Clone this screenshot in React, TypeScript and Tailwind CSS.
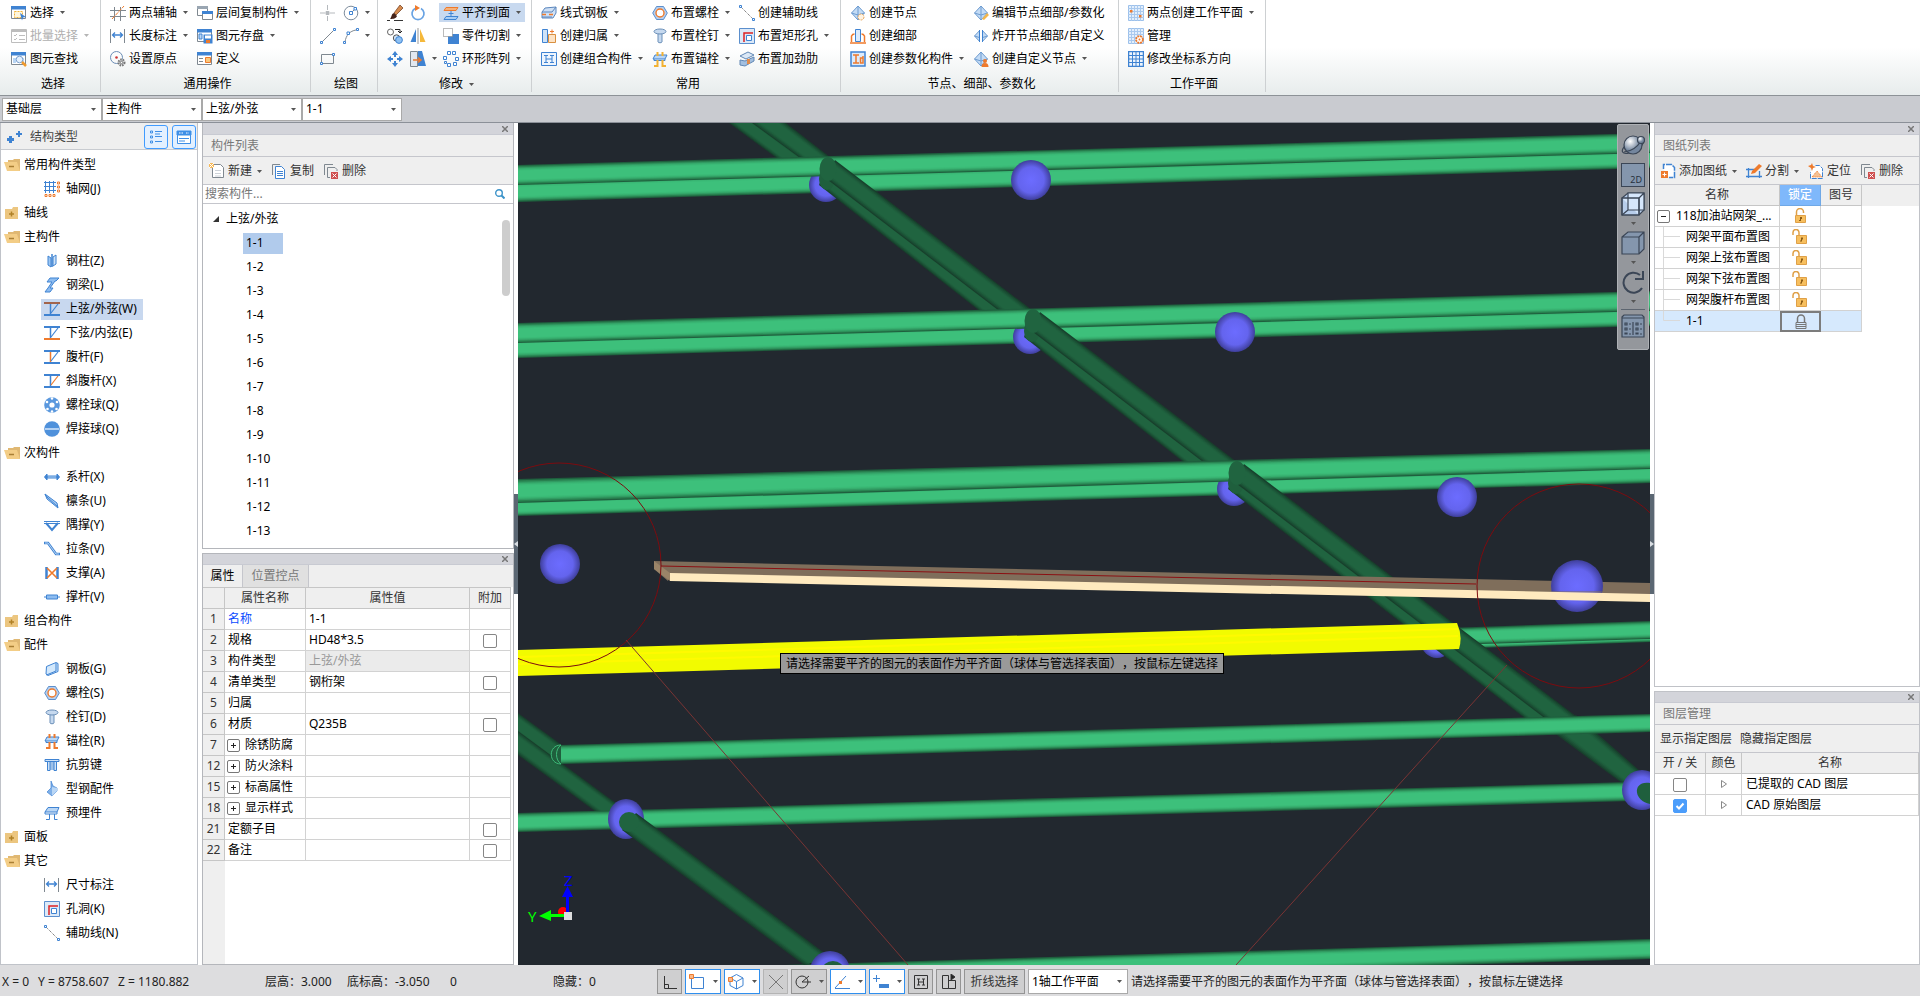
import React from "react";

type Pt = [number, number];

const B = "#3f83d2";
const L = "#b9d6f5";
const O = "#ee7a2c";
const G = "#7f8890";

const diamond = (
  <g>
    <path d="M8 1 14.5 8 8 15 1.500 8Z" fill="#c3dbf5" stroke="#6d9bd0" />
    <path d="M8 1v14M1.500 8 8 10l6.500-2" fill="none" stroke="#6d9bd0" />
  </g>
);
const windowBase = (
  <g>
    <path d="M.5 1.500h14v12H.5z" fill="#fff" stroke={G} />
    <path d="M0 1h15v3.500H0z" fill={B} />
  </g>
);
const gridBase = (
  <g>
    <path d="M.5.5h15v15H.5z" fill="#e3effc" stroke="#9cc0ea" />
    <path d="M3.500 0v16M6.500 0v16M9.500 0v16M12.500 0v16M0 3.500h16M0 6.500h16M0 9.500h16M0 12.500h16" stroke="#a9c9ee" />
  </g>
);
const nutShape = (
  <g>
    <path d="M4.500 1.500h7L15.300 8l-3.800 6.500h-7L.7 8Z" fill="#b6cfee" stroke="#5b8fcd" />
    <circle cx="8" cy="8" r="4" fill="#fff" stroke={O} strokeWidth="1.400" />
  </g>
);
const chord = (top: string, bottom: string, web: string, diag: string) => (
  <g fill="none">
    <path d="M0 2h16" stroke={top} strokeWidth="2" />
    <path d="M0 14h16" stroke={bottom} strokeWidth="2" />
    <path d="M6.500 3v10" stroke={web} strokeWidth="1.500" />
    <path d="M14 3 7 12" stroke={diag} strokeWidth="1.200" />
  </g>
);
const anchorShape = (leg: string) => (
  <g fill="none">
    <path d="M3 4h12l-2 4H1z" fill={L} stroke={B} />
    <path d="M2 8v1.500h11V8" stroke={B} />
    <path d="M5.500 1v4M10.500 1v4M5.500 9v6H2M10.500 9v6H14" stroke={leg} strokeWidth="2" />
  </g>
);

const icons: Record<string, React.ReactNode> = {
  select: (<g>{windowBase}<path d="M3.500 6.500h8v6h-8z" fill="#fff6dc" stroke="#f0b23a" strokeDasharray="2 1" /><path d="m9 8 6 4-3 .5-1 3z" fill={B} /></g>),
  batch: (<g fill="none" stroke="#bdbdbd"><path d="M.5 1.500h15v13H.5z" /><path d="M0 3h16" strokeWidth="2" /><path d="m3 7 1 1 2-2M8 7.500h6M3 11l1 1 2-2M8 11.500h6" /></g>),
  find: (<g>{windowBase}<path d="M2 7h3v5H2zM11 7h2v5h-2z" fill={L} /><circle cx="8.500" cy="8.500" r="3.300" fill="#e4f0fd" stroke="#7da0cc" /><path d="m11 11 4 4" stroke="#ef9a2d" strokeWidth="2.500" /></g>),
  axis: (<g fill="none"><path d="M4.500 2v14M10.500 2v14M0 5.500h16M0 11.500h16" stroke={G} /><path d="M2 14 14 1" stroke={O} strokeDasharray="4 1" /></g>),
  dim: (<g fill="none"><path d="M.5 1v14M14.500 1v14" stroke={G} /><path d="M3 7h9M5 4.500 2.500 7 5 9.500M10 4.500 12.500 7 10 9.500" stroke={B} strokeWidth="1.300" /></g>),
  origin: (<g fill="none"><circle cx="6.500" cy="6.500" r="6" stroke="#6b8db5" /><circle cx="6.500" cy="6.500" r="1.300" fill="#c33" /><circle cx="11.500" cy="11.500" r="3" fill="#d8dbde" stroke="#777" strokeWidth="2" strokeDasharray="1.500 1" /><circle cx="11.500" cy="11.500" r="1.200" fill="#fff" stroke="#777" /></g>),
  copyFloor: (<g><path d="M.5 1.500h10v9H.5z" fill="#fff" stroke={G} /><path d="M0 1h11v3H0z" fill="#9aa6b2" /><path d="M5.500 6.500h10v8h-10z" fill="#fff" stroke={G} /><path d="M5 6h11v3H5z" fill={B} /></g>),
  save: (<g>{windowBase}<path d="M2 6h3v5H2z" fill={L} stroke={B} /><path d="M6.500 6.500h9v9h-9z" fill={B} /><path d="M8 7.500h6v3H8z" fill="#fff" /><path d="M9 12h4v3H9z" fill={O} /></g>),
  define: (<g>{windowBase}<path d="M2 7.500h4M2 10.500h4" stroke={G} /><path d="M8.500 6.500h5v5h-5z" fill="#f9c77c" stroke={O} /></g>),
  point: (<g stroke="#b5b9bd"><path d="M0 8h5M10 8h5M7.500 0v5M7.500 11v5" /><path d="M6 6.500h3v3H6z" fill="#b5b9bd" /></g>),
  circle: (<g fill="none"><circle cx="8" cy="8" r="6.800" stroke="#7d8c9c" /><path d="m8 8 4-4" stroke={G} /><path d="M6.500 6.500h3v3h-3zM11 2.500h2.500V5H11z" fill="#fff" stroke={B} /></g>),
  line: (<g fill="none"><path d="M2 14 13 3" stroke={G} /><path d="M.5 13.500h2v2h-2zM13.500.5h2v2h-2z" fill="#fff" stroke={B} /></g>),
  arc: (<g fill="none"><path d="M2 14C3 7 7 3 13 2" stroke={G} /><path d="M.5 13.500h2v2h-2zM13.500.5h2v2h-2zM4 4h2.500v2.500H4z" fill="#fff" stroke={B} /></g>),
  rect: (<g fill="none"><path d="M1.500 3.500h12v9h-12z" stroke={G} /><path d="M.5 11.500h2v2h-2zM12.500 2.500h2v2h-2z" fill="#fff" stroke={B} /></g>),
  brush: (<g><path d="m7 8 6-8 3 3-7 7z" fill="#d58b4e" stroke="#6b3517" strokeWidth=".7" /><path d="m7 8 3 3c-1 3-5 3-7 3 2-2 1-5 4-6z" fill="#45231a" /><path d="M0 15.500h3M7 15.500h9" stroke="#333" /></g>),
  rotate: (<g fill="none"><path d="M5 3.500a6 6 0 1 0 6 0" stroke="#69a3e3" strokeWidth="1.700" /><path d="M5 0v6l5-3z" fill={O} /></g>),
  copyItem: (<g fill="none"><circle cx="3.500" cy="4" r="3" stroke="#666" /><circle cx="9.500" cy="10" r="3.200" fill="#cfe3f8" stroke="#555" /><circle cx="12" cy="12" r="3.400" fill="#8fc1f2" stroke={B} /><path d="M8 1.500h5V5m-2-2 2 2 2-2" stroke="#222" /></g>),
  mirror: (<g><path d="M6 1v13H.5z" fill={B} /><path d="M10 1v13h5.500z" fill="#f5b83a" /><path d="M8 0v16" stroke="#999" /></g>),
  move: (<g fill={B}><path d="m8 0 3 4H5zM8 16l3-4H5zM0 8l4-3v6zM16 8l-4-3v6z" /><path d="M7 3h2v3H7zM7 10h2v3H7zM3 7h3v2H3zM10 7h3v2h-3z" /></g>),
  trim: (<g><path d="M.5.5h7v15h-7z" fill="#e2e8f0" stroke={G} /><path d="M8 0h4l4 15H8z" fill={B} /><path d="M3 9h8M8 6.500 11 9l-3 2.500" stroke={O} strokeWidth="1.500" fill="none" /></g>),
  align: (<g fill="none"><path d="M3 2.500h12l-2 3H1z" fill="#f6b27c" stroke={O} /><path d="M3 11.500h12l-2 3H1z" fill="#a8cdf3" stroke={B} /><path d="M8 6v5M5.500 8.500h5" stroke={B} /></g>),
  cut: (<g><path d="M5 6h11v10H5z" fill={B} /><path d="M.5.5h9v8h-9z" fill="#fff" stroke="#777" strokeDasharray="1 1" /></g>),
  array: (<g fill="#fff" stroke={B}><path d="M4.500.5h3v3h-3zM9.500.5h3v3h-3zM.5 5.500h3v3h-3zM12.500 6.500h3v3h-3zM4.500 12.500h3v3h-3zM10.500 11.500h3v3h-3zM1.500 10.500h2v2h-2z" /></g>),
  plate: (<g><path d="m4 3 11-1v6l-3 5H1V7z" fill="#cfe0f5" stroke="#5a86bd" /><path d="M1 7h10l4-5M1 12h10" stroke="#5a86bd" fill="none" /><path d="M1 9.500h4M8 9.500h4" stroke={O} strokeWidth="1.500" /></g>),
  belong: (<g><path d="M1.500 1.500h5v13h-5z" fill="#cfe3f8" stroke={B} /><path d="M7.500 6.500h7v8h-7z" fill="#fde3c5" stroke="#d99040" /><path d="M9 3.500h4M11 1.500v4" stroke={O} /></g>),
  combo: (<g fill="none"><path d="M.5 1.500h15v13H.5z" fill="#eef5fd" stroke={B} /><path d="M3 4.500h4M9 4.500h4M3 11.500h4M9 11.500h4M5 5v6M11 5v6M5 8h6" stroke={B} /></g>),
  nut: nutShape,
  stud: (<g><path d="M6 5h4v9c0 1-4 1-4 0z" fill="#c6d9ef" stroke="#6b8fb8" /><ellipse cx="8" cy="3.500" rx="6" ry="2.500" fill="#c6d9ef" stroke="#6b8fb8" /></g>),
  anchor: anchorShape("#f2b233"),
  anchorRed: anchorShape(O),
  aux: (<g fill="none"><path d="m2 2 12 12" stroke="#555" strokeDasharray="1 1" /><path d="M.5.5h2v2h-2zM13.500 13.500h2v2h-2z" fill="#fff" stroke={B} /></g>),
  hole: (<g fill="none"><path d="M.5.5h15v15H.5z" fill="#dce9f8" stroke="#5b8fcd" /><path d="M5 14V5h9" stroke="#d22" strokeWidth="1.500" /><path d="M7.500 7.500h5v5h-5z" fill="#fff" stroke={B} /></g>),
  stiff: (<g><path d="M1 5 9 1l6 3-8 4z" fill="#dbe8f6" stroke="#6288b5" /><path d="M1 9v5l5 1 9-5V6l-9 4z" fill="#a3bfdf" stroke="#6288b5" /><path d="M8 8h3v5H8z" fill="#e08a4a" /></g>),
  node: (<g>{diamond}<circle cx="11" cy="12" r="3" fill="#fff3e2" stroke="#e7a75e" strokeDasharray="2 1" /></g>),
  detail: (<g><path d="M5.500 1.500h5v12h-5z" fill="#dcebfb" stroke={B} /><path d="M1.500 14V8q1-2 3-2M14.500 14V8q-1-2-3-2M0 15h16" fill="none" stroke={O} strokeWidth="1.500" /></g>),
  param: (<g fill="none"><path d="M1 1h14v14H1z" fill="#dcebfb" stroke={B} strokeWidth="1.500" /><path d="M3 4h6M6 4v8M3 12h6M13 7h-2.500v5H13V5" stroke={O} strokeWidth="1.500" /></g>),
  editNode: (<g>{diamond}<path d="m9 14 5-6 2 2-5 5z" fill="#f3b64b" /></g>),
  explode: (<g>{diamond}<path d="M8 0v16" stroke="#fff" strokeWidth="3" /><path d="M6.500 2v12M9.500 2v12" stroke={B} /></g>),
  custom: (<g>{diamond}<circle cx="12" cy="10" r="2" fill={O} /><path d="M8.500 16q0-4 3.500-4t3.500 4z" fill={O} /></g>),
  workplane: (<g>{gridBase}<path d="M2 5h2.500v2.500H2zM11 10h2.500v2.500H11z" fill={O} /></g>),
  manage: (<g>{gridBase}<circle cx="11.500" cy="11.500" r="3.400" fill="#fff" stroke={O} strokeWidth="1.800" strokeDasharray="2 .7" /><circle cx="11.500" cy="11.500" r="1" fill={O} /></g>),
  coord: (<g fill="none"><path d="M.5.5h15v15H.5z" fill="#eef5fd" stroke={B} strokeWidth="1.500" /><path d="M4.500 0v16M8 0v16M11.500 0v16M0 4.500h16M0 8h16M0 11.500h16" stroke={B} /></g>),
  axisGrid: (<g fill="none"><path d="M1.500 0v12M5.500 0v12M9.500 0v12M0 1.500h12M0 5.500h12M0 9.500h12" stroke={B} /><path d="M1 13.500h2v2H1zM5 13.500h2v2H5zM9 13.500h2v2H9zM13.500 1h2v2h-2zM13.500 5h2v2h-2zM13.500 9h2v2h-2z" stroke={O} /></g>),
  column: (<g><path d="m4 3 3 2v9l-3-2z" fill="#9dc6f2" stroke={B} /><path d="m8 1 0 13" stroke={B} strokeWidth="1.500" /><path d="m9 4 3-2v9l-3 2z" fill="#cfe3f8" stroke={B} /></g>),
  beam: (<g><path d="M6 1h9l-3 3h-1l-5 7h3l-3 4H1l3-4 4-6H3z" fill="#8dbcf0" stroke={B} /></g>),
  chordTop: chord("#a2644c", B, B, B),
  chordBottom: chord(B, O, B, B),
  web: chord(B, B, O, B),
  diagWeb: chord(B, B, B, O),
  boltBall: (<g><circle cx="8" cy="8" r="7.800" fill="#5a98de" /><g fill="#fff"><circle cx="8" cy="8" r="2.600" /><circle cx="3" cy="5" r="1.300" /><circle cx="13" cy="5" r="1.300" /><circle cx="3.500" cy="12" r="1.300" /><circle cx="12.500" cy="12" r="1.300" /><circle cx="8" cy="1.500" r="1.200" /><circle cx="8" cy="14.500" r="1.200" /></g></g>),
  weldBall: (<g><circle cx="8" cy="8" r="7.800" fill="#4f91db" /><path d="M1 8h14" stroke="#d4e7fb" strokeWidth="1.500" /></g>),
  tie: (<g stroke={B} fill={L}><path d="M3 7h10v2H3z" /><path d="M3 5 .5 8 3 11zM13 5l2.500 3-2.500 3z" fill={B} /></g>),
  purlin: (<g><path d="m1 1 2 5 11 9-1-5z" fill="#a7cbf2" stroke={B} /><path d="m1 1 2 3 11 10" stroke={B} fill="none" /></g>),
  knee: (<g fill="none" stroke={B}><path d="M0 4.500h16M0 6.500h16" /><path d="m2 6 6 7 6-7" strokeWidth="2" /></g>),
  stay: (<g fill="none" stroke={B}><path d="M0 2h4l8 11h4" strokeWidth="2.600" /><path d="M1 2h3l8 11h3" stroke={L} /></g>),
  brace: (<g fill="none"><path d="M2.500 2v12M13.500 2v12" stroke={B} strokeWidth="2.500" /><path d="m3 3 10 10M13 3 3 13" stroke={O} strokeWidth="1.600" /></g>),
  strut: (<g stroke={B}><path d="M0 8h16" /><path d="M2.500 6h11v4h-11z" fill="#8dbcf0" /></g>),
  plateG: (<g><path d="M2.500 5.500 12 1.500l2 1v8l-10 4-2-1.500z" fill="#d2e8fc" stroke={B} /><path d="M12 2v8l-9.500 4" fill="none" stroke={B} /></g>),
  shear: (<g fill="#cfe3f8" stroke={B}><path d="M1 2.500h14v2H1z" /><path d="M3.500 4.500h2.500v9H3.500zM10 4.500h2.500v9H10zM7 5v8M9 5v8" /></g>),
  fitting: (<g><path d="m7 0 2 5 4 2v3l-5 5-5-4 4-4z" fill="#7fb0e8" stroke={B} strokeWidth=".7" /><path d="m8 6 5 1v3l-5 5z" fill="#b9d6f5" /></g>),
  embed: (<g fill="none"><path d="M4 2.500h11l-2 4.500H1z" fill={L} stroke={B} /><path d="M1 7v2h12V7M5.500 9v5.500H2M10.500 9v5.500h3" stroke={B} /></g>),
  folderOpen: (<g><path d="M4 3h5l1-1h6v12H4z" fill="#e0b873" /><path d="M0 5h13l3 9H3z" fill="#f3cd86" /><path d="M5 9.500h5" stroke="#a97f34" strokeWidth="1.500" /></g>),
  folderClosed: (<g><path d="M1 4h7l1-2h5v12H1z" fill="#ecc680" /><path d="M5 9h5M7.500 6.500v5" stroke="#b08127" strokeWidth="1.500" /></g>),
  docNew: (<g><path d="M3.500 1.500h8l3 3v10h-11z" fill="#fff" stroke={G} /><path d="M6 7.500h6M6 10.500h6M6 13h6" stroke="#cdd2d8" /><path d="M0 0h5v5H0z" fill="#f6b95a" /><path d="m0 0 5 5M5 0 0 5" stroke="#fff" /></g>),
  docCopy: (<g fill="#fff"><path d="M1.500 12V1.500H9" stroke={G} fill="none" /><path d="M4.500 3.500h6l3 3v9h-9z" stroke={B} /><path d="M6 8.500h6M6 10.500h6M6 12.500h6" stroke={B} /></g>),
  docDelete: (<g fill="none"><path d="M1.500 12V1.500H10M7 14.500H4.500v-10H12l2 2V8" stroke={G} /><path d="M8 9h7v7H8z" fill="#cf4f4f" /><path d="m9.500 10.500 4 4M13.500 10.500l-4 4" stroke="#fff" /></g>),
  addSheet: (<g fill="none"><path d="M3.500 6V1.500h8l3 3v10H9" fill="#fff" stroke={B} strokeWidth="1.500" strokeDasharray="6 1" /><path d="M1 8h7v7H1z" fill={O} /><path d="M2.500 11.500h4M4.500 9.500v4" stroke="#fff" /></g>),
  split: (<g fill="none"><path d="M2.500 5v10M13.500 8v7M0 6.500h9M0 13.500h16" stroke={B} strokeWidth="1.300" /><path d="m5 11 1-3 7-7 3 2-7 7z" fill={O} /></g>),
  locate: (<g fill="none"><path d="M7.500 2.500h4l3 3v10h-12V9" fill="#fff" stroke={B} strokeDasharray="5 1" /><path d="m0 3 3-1 1-2 1 3 3 1-3 1-1 3-1-3z" fill={O} /><path d="m4 14 5-6 5 6z" fill="#f5c193" stroke={O} strokeDasharray="1 1" /></g>),
  unlockTop: (<g><path d="M4.500 7V4a3 3 0 0 1 7 0v1" fill="none" stroke="#dfa047" strokeWidth="1.500" /><path d="M3.500 7.500h10v7h-10z" fill="#f7bf5e" stroke="#dfa047" /><path d="M8 9h2v2H9v2H7v-1h1z" fill="#8c5c15" /></g>),
  unlock: (<g><path d="M1 6V3.500a2.500 2.500 0 0 1 6 0V7" fill="none" stroke="#dfa047" strokeWidth="1.500" /><path d="M4.500 6.500h10v8h-10z" fill="#f7bf5e" stroke="#dfa047" /><path d="M9 8.500h2v2h-1v2H8v-1h1z" fill="#8c5c15" /></g>),
  lock: (<g fill="none" stroke="#777"><path d="M4.500 8V4.500a3.500 3.500 0 0 1 7 0V8" strokeWidth="1.500" /><path d="M3 8.500h10v6H3zM3 10.500h10M3 12.500h10" /></g>),
  pins: (<g fill={B}><path d="M0 9h2V7h3v2h2v3H5v2H2v-2H0zM9 4h2V2h2v2h2v2h-2v2h-2V6H9z" /></g>),
};

function Icon({ name }: { name: string }) {
  return (
    <svg viewBox="0 0 16 16" className="size-4 shrink-0" aria-hidden="true">
      {icons[name]}
    </svg>
  );
}

function Caret({ dim = false }: { dim?: boolean }) {
  return (
    <svg viewBox="0 0 5 3" className={dim ? "h-[3px] w-[5px] shrink-0 text-[#b5b5b5]" : "h-[3px] w-[5px] shrink-0 text-[#555]"} aria-hidden="true">
      <path d="M0 0h5L2.500 3z" fill="currentColor" />
    </svg>
  );
}

type Tool = { icon: string; label?: string; caret?: boolean; off?: boolean; active?: boolean; name?: string };

function ToolButton({ t }: { t: Tool }) {
  return (
    <div className="flex h-[23px] items-center">
      <button
        aria-label={t.label ? undefined : t.name}
        className={`flex h-[19px] items-center gap-[3px] whitespace-nowrap px-1 ${t.active ? "bg-[#c8d9ef]" : ""} ${t.off ? "text-[#b0b0b0]" : "text-black"}`}
      >
        <Icon name={t.icon} />
        {t.label && <span>{t.label}</span>}
        {t.caret && <span className="pl-[3px]"><Caret dim={t.off} /></span>}
      </button>
    </div>
  );
}

type GroupData = { title: string; width: string; caret?: boolean; cols: { w: string; items: Tool[] }[] };

function Group({ title, width, cols, caret }: GroupData) {
  return (
    <section className={`flex shrink-0 flex-col ${width}`}>
      <div className="flex flex-1 pl-[5px] pt-px">
        {cols.map((c, i) => (
          <div key={i} className={`shrink-0 ${c.w}`}>
            {c.items.map((t) => <ToolButton key={t.icon} t={t} />)}
          </div>
        ))}
      </div>
      <h2 className="flex h-[22px] items-center justify-center gap-1.5 pl-1">
        {title}
        {caret && <Caret />}
      </h2>
    </section>
  );
}

const groups: GroupData[] = [
  { title: "选择", width: "w-[98px]", cols: [{ w: "w-[90px]", items: [{ icon: "select", label: "选择", caret: true }, { icon: "batch", label: "批量选择", caret: true, off: true }, { icon: "find", label: "图元查找" }] }] },
  {
    title: "通用操作", width: "w-[209px]", cols: [
      { w: "w-[87px]", items: [{ icon: "axis", label: "两点辅轴", caret: true }, { icon: "dim", label: "长度标注", caret: true }, { icon: "origin", label: "设置原点" }] },
      { w: "w-[110px]", items: [{ icon: "copyFloor", label: "层间复制构件", caret: true }, { icon: "save", label: "图元存盘", caret: true }, { icon: "define", label: "定义" }] },
    ],
  },
  {
    title: "绘图", width: "w-[66px]", cols: [
      { w: "w-[23px]", items: [{ icon: "point", name: "点" }, { icon: "line", name: "直线" }, { icon: "rect", name: "矩形" }] },
      { w: "w-[32px]", items: [{ icon: "circle", name: "圆", caret: true }, { icon: "arc", name: "弧", caret: true }] },
    ],
  },
  {
    title: "修改", width: "w-[153px]", caret: true, cols: [
      { w: "w-[23px]", items: [{ icon: "brush", name: "格式刷" }, { icon: "copyItem", name: "复制" }, { icon: "move", name: "移动" }] },
      { w: "w-[33px]", items: [{ icon: "rotate", name: "旋转" }, { icon: "mirror", name: "镜像" }, { icon: "trim", name: "延伸", caret: true }] },
      { w: "w-[90px]", items: [{ icon: "align", label: "平齐到面", caret: true, active: true }, { icon: "cut", label: "零件切割", caret: true }, { icon: "array", label: "环形阵列", caret: true }] },
    ],
  },
  {
    title: "常用", width: "w-[308px]", cols: [
      { w: "w-[111px]", items: [{ icon: "plate", label: "线式钢板", caret: true }, { icon: "belong", label: "创建归属", caret: true }, { icon: "combo", label: "创建组合构件", caret: true }] },
      { w: "w-[87px]", items: [{ icon: "nut", label: "布置螺栓", caret: true }, { icon: "stud", label: "布置栓钉", caret: true }, { icon: "anchor", label: "布置锚栓", caret: true }] },
      { w: "w-[100px]", items: [{ icon: "aux", label: "创建辅助线" }, { icon: "hole", label: "布置矩形孔", caret: true }, { icon: "stiff", label: "布置加劲肋" }] },
    ],
  },
  {
    title: "节点、细部、参数化", width: "w-[277px]", cols: [
      { w: "w-[123px]", items: [{ icon: "node", label: "创建节点" }, { icon: "detail", label: "创建细部" }, { icon: "param", label: "创建参数化构件", caret: true }] },
      { w: "w-[146px]", items: [{ icon: "editNode", label: "编辑节点细部/参数化" }, { icon: "explode", label: "炸开节点细部/自定义" }, { icon: "custom", label: "创建自定义节点", caret: true }] },
    ],
  },
  { title: "工作平面", width: "w-[146px]", cols: [{ w: "w-[138px]", items: [{ icon: "workplane", label: "两点创建工作平面", caret: true }, { icon: "manage", label: "管理" }, { icon: "coord", label: "修改坐标系方向" }] }] },
];

function Combo({ value, label, className }: { value: string; label: string; className: string }) {
  return (
    <div className={`grid items-center border border-[#a9a9a9] bg-white ${className}`}>
      <select aria-label={label} className="col-start-1 row-start-1 h-full w-full appearance-none bg-transparent pl-[3px] text-black outline-none">
        <option>{value}</option>
      </select>
      <span className="pointer-events-none col-start-1 row-start-1 mr-[5px] justify-self-end"><Caret /></span>
    </div>
  );
}

type Node = { folder?: "open" | "closed"; icon?: string; label: string; active?: boolean };
const tree: Node[] = [
  { folder: "open", label: "常用构件类型" },
  { icon: "axisGrid", label: "轴网(J)" },
  { folder: "closed", label: "轴线" },
  { folder: "open", label: "主构件" },
  { icon: "column", label: "钢柱(Z)" },
  { icon: "beam", label: "钢梁(L)" },
  { icon: "chordTop", label: "上弦/外弦(W)", active: true },
  { icon: "chordBottom", label: "下弦/内弦(E)" },
  { icon: "web", label: "腹杆(F)" },
  { icon: "diagWeb", label: "斜腹杆(X)" },
  { icon: "boltBall", label: "螺栓球(Q)" },
  { icon: "weldBall", label: "焊接球(Q)" },
  { folder: "open", label: "次构件" },
  { icon: "tie", label: "系杆(X)" },
  { icon: "purlin", label: "檩条(U)" },
  { icon: "knee", label: "隅撑(Y)" },
  { icon: "stay", label: "拉条(V)" },
  { icon: "brace", label: "支撑(A)" },
  { icon: "strut", label: "撑杆(V)" },
  { folder: "closed", label: "组合构件" },
  { folder: "open", label: "配件" },
  { icon: "plateG", label: "钢板(G)" },
  { icon: "nut", label: "螺栓(S)" },
  { icon: "stud", label: "栓钉(D)" },
  { icon: "anchorRed", label: "锚栓(R)" },
  { icon: "shear", label: "抗剪键" },
  { icon: "fitting", label: "型钢配件" },
  { icon: "embed", label: "预埋件" },
  { folder: "closed", label: "面板" },
  { folder: "open", label: "其它" },
  { icon: "dim", label: "尺寸标注" },
  { icon: "hole", label: "孔洞(K)" },
  { icon: "aux", label: "辅助线(N)" },
];

function StructurePanel() {
  return (
    <aside className="flex w-[198px] shrink-0 flex-col border border-t-0 border-[#c0c3c9] bg-white">
      <header className="flex h-[27px] shrink-0 items-center border-b border-[#c8cbd0] bg-[#efefef] pl-[6px] pr-px pt-px text-[#444]">
        <Icon name="pins" />
        <span className="flex-1 pl-[7px]">结构类型</span>
        <button aria-label="列表视图" className="mr-1 size-6 rounded-[3px] border border-[#409bff] bg-[#e3f0ff] p-[3px]">
          <svg viewBox="0 0 16 16" className="size-4" fill="none" stroke="#3f8fe6">
            <path d="M2.500 2h2v2h-2zM2.500 7h2v2h-2zM2.500 12h2v2h-2zM7 2.500h7M7 5h5M7 7.500h7M7 12.500h7" />
          </svg>
        </button>
        <button aria-label="窗口视图" className="size-6 rounded-[3px] border border-[#409bff] bg-[#e3f0ff] p-[3px]">
          <svg viewBox="0 0 16 16" className="size-4" fill="none" stroke="#3f8fe6">
            <path d="M1.500 2.500h13v12h-13z" fill="#fff" /><path d="M1 2h14v4H1z" fill="#3f8fe6" /><path d="M3 4h4M10 4h3" stroke="#fff" strokeDasharray="1 .5" /><path d="M3 9.500h10M3 12h6" />
          </svg>
        </button>
      </header>
      <ul className="min-h-0 flex-1 overflow-hidden pt-[3px]">
        {tree.map((n) => (
          <li key={n.label} className={n.folder ? "flex h-6 items-center pl-[3px]" : "flex h-6 items-center pl-10"}>
            {n.folder ? (
              <button className="flex items-center gap-1"><Icon name={n.folder === "open" ? "folderOpen" : "folderClosed"} />{n.label}</button>
            ) : (
              <button className={`flex h-[21px] items-center gap-1.5 pl-[3px] pr-1.5 ${n.active ? "bg-[#c8d8ef]" : ""}`}><Icon name={n.icon ?? ""} />{n.label}</button>
            )}
          </li>
        ))}
      </ul>
    </aside>
  );
}

function PanelTop({ title, lower = false }: { title: string; lower?: boolean }) {
  return (
    <div className={`flex shrink-0 items-center justify-end border-b border-[#c8cad2] bg-[#d3d4da] pr-[5px] ${lower ? "h-[11px]" : "h-[12px]"}`}>
      <button aria-label={`关闭${title}`} className="flex">
        <svg viewBox="0 0 6 6" className="size-1.5" stroke="#777" strokeWidth="1.500"><path d="m0 0 6 6M6 0 0 6" /></svg>
      </button>
    </div>
  );
}

function PanelTitle({ children }: { children: string }) {
  return <h3 className="flex h-[22px] shrink-0 items-center border-b border-[#c5c6cc] bg-[#efefef] pl-2 pt-px text-[#777]">{children}</h3>;
}

function BarButton({ icon, label, caret }: { icon: string; label: string; caret?: boolean }) {
  return (
    <button className="flex shrink-0 items-center gap-[3px] text-[#333]">
      <Icon name={icon} />
      {label}
      {caret && <span className="pl-0.5"><Caret /></span>}
    </button>
  );
}

const bar = "flex h-[28px] shrink-0 items-center border-b border-[#c5c6cc] bg-[#efefef] pt-px text-[#333]";
const members = ["1-1", "1-2", "1-3", "1-4", "1-5", "1-6", "1-7", "1-8", "1-9", "1-10", "1-11", "1-12", "1-13"];

function MemberPanel() {
  return (
    <section className="flex min-h-0 flex-[427_1_0] flex-col border border-t-0 border-[#b4b6bb] bg-white">
      <PanelTop title="构件列表" />
      <PanelTitle>构件列表</PanelTitle>
      <div className={`${bar} gap-[9px] pl-1.5`}>
        <BarButton icon="docNew" label="新建" caret />
        <BarButton icon="docCopy" label="复制" />
        <BarButton icon="docDelete" label="删除" />
      </div>
      <div className="flex h-[19px] shrink-0 items-center border-b border-[#c5c6cc] pl-0.5 pr-2">
        <input aria-label="搜索构件" placeholder="搜索构件..." className="min-w-0 flex-1 bg-transparent outline-none placeholder:text-[#777]" />
        <svg viewBox="0 0 10 10" className="size-2.5" fill="none" stroke="#3c93c9"><circle cx="4" cy="4" r="3.300" strokeWidth="1.400" /><path d="m6.500 6.500 3 3" strokeWidth="2" /></svg>
      </div>
      <div className="flex min-h-0 flex-1 overflow-hidden">
        <div className="flex-1 pt-[3px]">
          <div className="flex h-6 items-center gap-[7px] pl-[10px]">
            <svg viewBox="0 0 6 6" className="size-1.5"><path d="M6 0v6H0z" fill="#333" /></svg>
            上弦/外弦
          </div>
          <ul>
            {members.map((m, i) => (
              <li key={m} className="flex h-6 items-center pl-10">
                <button className={`flex h-[21px] w-10 items-center pl-[3px] ${i === 0 ? "bg-[#b1cbec]" : ""}`}>{m}</button>
              </li>
            ))}
          </ul>
        </div>
        <div className="mr-[3px] mt-4 h-[76px] w-2 rounded bg-[#cdcdcd]" />
      </div>
    </section>
  );
}

type Prop = { n: number; label: string; value?: string; check?: boolean; group?: boolean; off?: boolean };
const props: Prop[] = [
  { n: 1, label: "名称", value: "1-1" },
  { n: 2, label: "规格", value: "HD48*3.5", check: true },
  { n: 3, label: "构件类型", value: "上弦/外弦", off: true },
  { n: 4, label: "清单类型", value: "钢桁架", check: true },
  { n: 5, label: "归属" },
  { n: 6, label: "材质", value: "Q235B", check: true },
  { n: 7, label: "除锈防腐", group: true },
  { n: 12, label: "防火涂料", group: true },
  { n: 15, label: "标高属性", group: true },
  { n: 18, label: "显示样式", group: true },
  { n: 21, label: "定额子目", check: true },
  { n: 22, label: "备注", check: true },
];
const cell = "h-[21px] border-b border-r border-[#d2d2d2] p-0";
const headCell = "h-[21px] border-b border-r border-[#c6c6c6] bg-[#efefef] p-0 text-center font-normal text-[#333]";

function Check({ label, on = false }: { label: string; on?: boolean }) {
  return (
    <span className="inline-grid size-3.5 align-middle">
      <input type="checkbox" defaultChecked={on} aria-label={label} className="col-start-1 row-start-1 size-3.5 appearance-none rounded-[2px] border border-[#868686] bg-white checked:border-[#4b9dfb] checked:bg-[#4b9dfb]" />
      {on && <svg viewBox="0 0 14 14" className="pointer-events-none col-start-1 row-start-1 size-3.5" fill="none" stroke="#fff" strokeWidth="2"><path d="m3.500 7 2.500 2.500 4.500-5" /></svg>}
    </span>
  );
}

function Expander({ sign, label }: { sign: "+" | "-"; label: string }) {
  return (
    <button aria-label={label} className="flex size-[13px] shrink-0 items-center justify-center rounded-[2px] border border-[#777] bg-white">
      <svg viewBox="0 0 5 5" className="size-[5px]" stroke="#222"><path d={sign === "+" ? "M0 2.500h5M2.500 0v5" : "M0 2.500h5"} /></svg>
    </button>
  );
}

function PropertyPanel() {
  return (
    <section className="flex min-h-0 flex-[411_1_0] flex-col border border-[#b4b6bb] bg-white">
      <PanelTop title="属性" lower />
      <div className="flex h-[22px] shrink-0 bg-[#efefef]" role="tablist">
        <button role="tab" aria-selected="true" className="w-10 border-r border-[#c5c6cc] text-black">属性</button>
        <button role="tab" aria-selected="false" className="w-[66px] border-r border-[#c5c6cc] bg-[#e0e0e0] text-[#777]">位置控点</button>
      </div>
      <div className="pr-0.5">
        <table className="w-full table-fixed border-separate border-spacing-0 border-t border-[#c6c6c6]">
          <colgroup><col className="w-[22px]" /><col className="w-[81px]" /><col /><col className="w-[41px]" /></colgroup>
          <thead>
            <tr><th className={headCell} /><th className={headCell}>属性名称</th><th className={headCell}>属性值</th><th className={headCell}>附加</th></tr>
          </thead>
          <tbody>
            {props.map((p) => (
              <tr key={p.n}>
                <th className={headCell}>{p.n}</th>
                <td className={`${cell} ${p.n === 1 ? "text-[#0a4bff]" : ""}`}>
                  {p.group ? <span className="flex items-center gap-[5px] pl-0.5"><Expander sign="+" label={`展开${p.label}`} />{p.label}</span> : <span className="pl-[3px]">{p.label}</span>}
                </td>
                <td className={`${cell} pl-[3px]! ${p.off ? "bg-[#ebebeb] text-[#999]" : ""}`}>{p.value}</td>
                <td className={`${cell} text-center`}>{p.check && <Check label={`附加${p.label}`} />}</td>
              </tr>
            ))}
          </tbody>
        </table>
      </div>
      <div className="flex-1"><div className="h-full w-[22px] bg-[#efefef]" /></div>
    </section>
  );
}

const sheets = ["网架平面布置图", "网架上弦布置图", "网架下弦布置图", "网架腹杆布置图", "1-1"];

function SheetPanel() {
  return (
    <section className="flex min-h-0 flex-[565_1_0] flex-col border border-t-0 border-[#c0c2c7] bg-white">
      <PanelTop title="图纸列表" />
      <PanelTitle>图纸列表</PanelTitle>
      <div className={`${bar} gap-[9px] pl-[5px]`}>
        <BarButton icon="addSheet" label="添加图纸" caret />
        <BarButton icon="split" label="分割" caret />
        <BarButton icon="locate" label="定位" />
        <BarButton icon="docDelete" label="删除" />
      </div>
      <div className="bg-[linear-gradient(#efefef_21px,#fff_21px)]">
        <table className="w-[207px] table-fixed border-separate border-spacing-0 bg-white">
          <colgroup><col className="w-[125px]" /><col className="w-[41px]" /><col className="w-[41px]" /></colgroup>
          <thead>
            <tr><th className={headCell}>名称</th><th className="h-[21px] border-b border-r border-[#6fa8e6] bg-[#7fb8fb] p-0 text-center font-medium text-white">锁定</th><th className={headCell}>图号</th></tr>
          </thead>
          <tbody>
            <tr>
              <td className={cell}><span className="flex items-center gap-1.5 pl-0.5"><Expander sign="-" label="折叠图纸" />118加油站网架_...</span></td>
              <td className={cell}><span className="flex justify-center"><Icon name="unlockTop" /></span></td>
              <td className={cell} />
            </tr>
            {sheets.map((s, i) => (
              <tr key={s} className={i === 4 ? "bg-[#d6e9fd]" : ""}>
                <td className={`${cell} ${i === 4 ? "border-r-0" : ""}`}>
                  <span className="flex h-5 items-center gap-1.5 pl-2">
                    <svg viewBox="0 0 17 20" className="h-5 w-[17px]" fill="none" stroke="#d9d9d9"><path d={i === 4 ? "M.5 0v9.500H17" : "M.5 0v20M.5 9.500H17"} /></svg>
                    {s}
                  </span>
                </td>
                <td className={i === 4 ? "h-[21px] border-2 border-[#7c7c7c] p-0" : cell}><span className="flex justify-center"><Icon name={i === 4 ? "lock" : "unlock"} /></span></td>
                <td className={cell} />
              </tr>
            ))}
          </tbody>
        </table>
      </div>
    </section>
  );
}

function LayerPanel() {
  return (
    <section className="flex min-h-0 flex-[273_1_0] flex-col border border-[#c0c2c7] bg-white">
      <PanelTop title="图层管理" lower />
      <PanelTitle>图层管理</PanelTitle>
      <div className={`${bar} gap-2 pl-[5px]`}>
        <button>显示指定图层</button>
        <button>隐藏指定图层</button>
      </div>
      <table className="w-full table-fixed border-separate border-spacing-0">
        <colgroup><col className="w-[51px]" /><col className="w-[36px]" /><col /></colgroup>
        <thead><tr><th className={headCell}>开 / 关</th><th className={headCell}>颜色</th><th className={headCell}>名称</th></tr></thead>
        <tbody>
          {["已提取的 CAD 图层", "CAD 原始图层"].map((n, i) => (
            <tr key={n}>
              <td className={`${cell} text-center`}><Check label={n} on={i === 1} /></td>
              <td className={cell}><svg viewBox="0 0 6 8" className="mx-auto h-2 w-1.5" fill="none" stroke="#888"><path d="M.5.5v7l5-3.500z" /></svg></td>
              <td className={`${cell} pl-1!`}>{n}</td>
            </tr>
          ))}
        </tbody>
      </table>
    </section>
  );
}

const greens = ["#1f5f3e", "#28804f", "#319a62", "#37ae6e", "#3bba77", "#3dc07b"];
const darks = ["#18402c", "#1a4c33", "#1c5638", "#1f5f3d", "#206440"];
const mix = (a: Pt, b: Pt, t: number): Pt => [a[0] + (b[0] - a[0]) * t, a[1] + (b[1] - a[1]) * t];

function Tube({ a, b, c, d, dark }: { a: Pt; b: Pt; c: Pt; d: Pt; dark?: boolean }) {
  const colors = dark ? darks : greens;
  return (
    <g>
      {colors.map((fill, i) => {
        const t = i * 0.055;
        return <polygon key={fill} fill={fill} points={[mix(a, d, t), mix(b, c, t), mix(c, b, t), mix(d, a, t)].map((p) => p.join(",")).join(" ")} />;
      })}
    </g>
  );
}

function Ball({ x, y, r = 20 }: { x: number; y: number; r?: number }) {
  return <circle cx={x} cy={y} r={r} fill="url(#ball)" />;
}

function Chord({ x, y, ex, ey }: { x: number; y: number; ex: number; ey: number }) {
  return (
    <g>
      <Tube dark a={[x, y + 12]} b={[ex - 28, ey]} c={[ex - 54, ey]} d={[x - 8, y + 28]} />
      <ellipse cx={x} cy={y + 22} rx="8" ry="11" fill="#1f5f3d" />
      <Tube dark a={[x + 8, y + 3]} b={[ex, ey]} c={[ex - 34, ey]} d={[x - 3, y + 20]} />
      <ellipse cx={x + 1} cy={y + 12} rx="8.500" ry="12" fill="#206440" />
    </g>
  );
}

function Scene() {
  return (
    <svg viewBox="0 0 1132 842" preserveAspectRatio="xMinYMin slice" className="size-full" role="img" aria-label="网架三维模型">
      <defs>
        <radialGradient id="ball">
          <stop offset="0" stopColor="#6c6cff" />
          <stop offset=".65" stopColor="#6464ee" />
          <stop offset="1" stopColor="#3f3f9c" />
        </radialGradient>
      </defs>
      <rect width="1132" height="842" fill="#22282f" />
      <Tube dark a={[240, 0]} b={[307, 50]} c={[279, 50]} d={[211, 0]} />
      <Tube dark a={[268, 0]} b={[330, 48]} c={[300, 48]} d={[234, 0]} />
      <Tube a={[0, 58]} b={[1132, 26]} c={[1132, 45]} d={[0, 79]} />
      <Ball x={308} y={62} r={17} />
      <Tube a={[0, 42]} b={[1132, 10]} c={[1132, 30]} d={[0, 62]} />
      <Chord x={309} y={34} ex={531} ey={200} />
      <Tube a={[0, 215]} b={[1132, 184]} c={[1132, 203]} d={[0, 235]} />
      <Ball x={512} y={214} r={17} />
      <Tube a={[0, 200]} b={[1132, 168]} c={[1132, 188]} d={[0, 220]} />
      <Chord x={514} y={186} ex={736} ey={352} />
      <Tube a={[0, 376]} b={[1132, 342]} c={[1132, 360]} d={[0, 393]} />
      <Ball x={716} y={366} r={17} />
      <Tube a={[0, 356]} b={[1132, 326]} c={[1132, 346]} d={[0, 380]} />
      <Ball x={513} y={57} /><Ball x={717} y={209} /><Ball x={939} y={374} /><Ball x={42} y={441} />
      <Ball x={919} y={519} r={16} />
      <Tube a={[930, 514]} b={[1132, 506]} c={[1132, 519]} d={[930, 526]} />
      <Tube a={[930, 505]} b={[1132, 498]} c={[1132, 516]} d={[930, 522]} />
      <Tube dark a={[1058, 592]} b={[1130, 655]} c={[1112, 666]} d={[1024, 601]} />
      <Chord x={718} y={338} ex={1071} ey={603} />
      <Tube dark a={[0, 590]} b={[48, 625]} c={[44, 645]} d={[0, 612]} />
      <Tube dark a={[0, 608]} b={[110, 689]} c={[96, 702]} d={[0, 632]} />
      <Tube a={[0, 690]} b={[1112, 659]} c={[1112, 678]} d={[0, 709]} />
      <Tube a={[43, 622]} b={[1132, 591]} c={[1132, 609]} d={[43, 641]} />
      <path d="M43 622c-13 0-13 19 0 19M43 622c-6 4-6 15 0 19" fill="#1f5f3d" stroke="#3dbb79" />
      <Tube a={[200, 844]} b={[1132, 816]} c={[1132, 836]} d={[200, 864]} />
      <ellipse cx="108" cy="696" rx="18" ry="20" fill="url(#ball)" />
      <Tube dark a={[118, 690]} b={[312, 834]} c={[286, 842]} d={[104, 707]} />
      <circle cx="111" cy="699" r="10" fill="#206440" />
      <Ball x={312} y={848} />
      <ellipse cx="315" cy="847" rx="11" ry="9" fill="#1f5f3d" />
      <Ball x={1124} y={667} />
      <path d="M1132 660c-18-3-17 18 0 21z" fill="#1f5f3d" />
      <polygon points="136,438 1132,460 1132,472 152,451 150,458 136,446" fill="#7f6e5b" />
      <polygon points="136,438 152,450 152,458 136,446" fill="#9a8468" />
      <Ball x={1059} y={463} r={26} />
      <path d="M1034 468h50l-1 4h-48z" fill="#7f6e5b" opacity=".5" />
      <polygon points="152,450 1132,471 1132,479 152,458" fill="#ffeabf" />
      <path d="M143 443 958 461" stroke="#8b0f12" />
      <path d="M0 527 939 500q6 13 2 26L0 553z" fill="#f2fb00" />
      <path d="m0 541 940-28M0 534l940-28" stroke="#fffa00" strokeWidth="2" />
      <g fill="none" stroke="#7c0b0f">
        <circle cx="41" cy="442" r="102" />
        <circle cx="1061" cy="463" r="102" />
      </g>
      <g stroke="#7a3434"><path d="m108 517 282 325M989 542 718 842" /></g>
      <g>
        <circle cx="45" cy="789" r="5" fill="#f00" />
        <path d="M48 790v-16h-4l5.500-11 5.500 11h-4v16z" fill="#00f" />
        <path d="M46 791H33v-4l-12 6 12 5v-4h13z" fill="#0f0" />
        <path d="M46 789h8v8h-8z" fill="#ddd" />
        <text x="46" y="763" fill="#00f" fontSize="15" fontFamily="Noto Sans">Z</text>
        <text x="10" y="799" fill="#0f0" fontSize="15" fontFamily="Noto Sans">Y</text>
      </g>
    </svg>
  );
}

function ViewButton({ label, children }: { label: string; children: React.ReactNode }) {
  return (
    <button aria-label={label} className="flex">
      <svg viewBox="0 0 24 24" className="size-6" fill="none" stroke="#3b4656" strokeWidth="1.200">{children}</svg>
    </button>
  );
}

function ViewTools() {
  return (
    <div className="absolute right-px top-px flex w-8 flex-col items-center rounded-[2px] border border-[#aeb1b5] bg-[#94979c] pb-[11px] pt-2">
      <ViewButton label="动态观察">
        <defs><radialGradient id="orb" cx=".35" cy=".3"><stop offset="0" stopColor="#fff" /><stop offset="1" stopColor="#74869e" /></radialGradient></defs>
        <ellipse cx="12" cy="13" rx="12" ry="5" transform="rotate(-30 12 13)" />
        <circle cx="12" cy="12" r="9" fill="url(#orb)" /><path d="M3 19Q14 18 20 8" /><circle cx="20" cy="7" r="3.500" fill="url(#orb)" />
      </ViewButton>
      <button className="mb-1 mt-1.5 flex size-6 items-end justify-end border border-[#3b4656] bg-[#8496ad] pr-0.5 text-[9px] leading-3 text-[#26303d]">2D</button>
      <div className="flex flex-col items-center gap-[6px] pt-px">
        <ViewButton label="线框显示"><path d="M1 6 7 1h16v17l-5 5H1z" fill="#b7cdea" /><path d="M7 1h16v17H7zM1 6h17v17M18 6l5-5M1 23l6-5" fill="#d6e7fb" /><path d="M1 6h17v17H1z" fill="none" /></ViewButton>
        <Caret />
        <ViewButton label="实体显示"><path d="M1 6 7 1h16v17l-5 5H1zM1 6h17v17M18 6l5-5" fill="#8496ad" /></ViewButton>
        <Caret />
        <ViewButton label="旋转视图"><path d="M19 5a10 10 0 1 0 2 13" strokeWidth="2" /><path d="M22 1v8h-8" strokeWidth="2" /></ViewButton>
        <Caret />
      </div>
      <hr className="mb-1 mt-1.5 w-6 border-[#5d6570]" />
      <ViewButton label="显示设置"><path d="M1 3 3 1h18l2 2v20H1zM1 4h22" fill="#8496ad" /><path d="M12 8v13M4 9h2v2H4zM4 14h2v2H4zM4 19h2v1H4zM15 9h2v2h-2zM15 14h2v2h-2zM15 19h2v1h-2zM8 10h2M8 15h2M19 10h2M19 15h2M8 20h2M19 20h2" /></ViewButton>
    </div>
  );
}

function Splitter({ flip = false }: { flip?: boolean }) {
  return (
    <div className="flex w-1 shrink-0 items-center bg-white">
      <div className="flex h-[100px] w-1 items-center bg-[#5b6773]">
        <svg viewBox="0 0 4 6" className="h-1.5 w-1"><path d={flip ? "M0 0v6l4-3z" : "M4 0v6L0 3z"} fill="#d9dde2" /></svg>
      </div>
    </div>
  );
}

type Snap = { label: string; tone: "on" | "gray" | "off"; caret?: boolean; art: React.ReactNode };
const snaps: Snap[] = [
  { label: "正交", tone: "gray", art: <path d="M2.500 2v12.500H15M2.500 10.500h4v4" stroke="#333" /> },
  { label: "对象捕捉", tone: "on", caret: true, art: <g><path d="M3 3.500h11.500v11H2.500V4" stroke={B} /><path d="M.5.5h4v4h-4z" fill="#f9b98a" stroke={O} /></g> },
  { label: "三维捕捉", tone: "on", caret: true, art: <g stroke={B}><path d="m2 4 6.500-3.500L15 4v7.500L8.500 15 2 11.500zM2 4l6.500 3.500L15 4M8.500 7.500V15" /><path d="M.5 3.500h4v4h-4z" fill="#f9b98a" stroke={O} /></g> },
  { label: "交点捕捉", tone: "off", art: <g><path d="m1 1 14 14M15 1 1 15" stroke="#777" /><path d="M7 7h2v2H7z" fill="#777" /></g> },
  { label: "极轴", tone: "gray", caret: true, art: <g stroke="#333"><circle cx="7" cy="8" r="6" /><path d="m7 8 7-6M7 8h9" /></g> },
  { label: "角度捕捉", tone: "on", caret: true, art: <g><path d="M1 14.500h15M1 14 12 2" stroke={B} /><path d="M5 7h3v3H5z" fill={O} /></g> },
  { label: "动态输入", tone: "on", caret: true, art: <g><path d="M3.500 1v7M0 4.500h7" stroke={B} /><path d="M6 10h10v4H6z" fill={B} /></g> },
  { label: "构件捕捉", tone: "gray", art: <g stroke="#333"><path d="M1.500 1.500h13v13h-13zM4 5h3M9 5h3M4 11h3M9 11h3M5.500 5v6M10.500 5v6M5.500 8h5" /></g> },
  { label: "构件选择", tone: "gray", art: <g stroke="#333"><path d="M1.500 1.500h6v13h-6zM7.500 6.500h7v8h-7z" /><path d="m10 0 0 6 4-3z" fill="#222" /></g> },
];

function StatusBar() {
  return (
    <footer className="flex h-[31px] shrink-0 items-center gap-[3px] overflow-hidden whitespace-nowrap bg-[#dddddf] pt-0.5 text-[#222]">
      <div className="flex w-[654px] shrink-0 pl-0.5">
        <span className="w-9">X = 0</span>
        <span className="w-20">Y = 8758.607</span>
        <span className="w-[147px]">Z = 1180.882</span>
        <span className="w-[82px]">层高：3.000</span>
        <span className="w-[103px]">底标高：-3.050</span>
        <span className="w-[103px]">0</span>
        <span>隐藏：0</span>
      </div>
      {snaps.map((s) => (
        <button
          key={s.label}
          aria-label={s.label}
          className={`flex h-[25px] shrink-0 items-center border ${s.caret ? "w-9 gap-2 pl-[3px]" : "w-[25px] justify-center"} ${s.tone === "on" ? "border-[#2f8fee] bg-white" : s.tone === "gray" ? "border-[#949494] bg-[#cfcfd0]" : "border-[#b4b4b4] bg-[#cfcfd0]"}`}
        >
          <svg viewBox="0 0 16 16" className="size-4 shrink-0" fill="none">{s.art}</svg>
          {s.caret && <Caret />}
        </button>
      ))}
      <button className="h-[25px] w-[61px] shrink-0 border border-[#949494] bg-[#cfcfd0] text-[#333]">折线选择</button>
      <Combo value="1轴工作平面" label="工作平面" className="h-[25px] w-[100px] shrink-0" />
      <span>请选择需要平齐的图元的表面作为平齐面（球体与管选择表面），按鼠标左键选择</span>
    </footer>
  );
}

export default function App() {
  return (
    <div className="flex h-screen flex-col overflow-hidden bg-white pb-px font-['Noto_Sans','Noto_Sans_CJK_SC',sans-serif] text-[12px] leading-4 text-black [text-spacing-trim:space-all]">
      <nav className="flex h-24 shrink-0 overflow-hidden border-b border-[#8d9297] bg-linear-to-b from-white from-50% to-[#e7ecec] pl-0.5">
        {groups.map((g) => (
          <React.Fragment key={g.title}>
            <Group {...g} />
            <div className="mb-[3px] w-px shrink-0 bg-[#cdd0d2]" />
          </React.Fragment>
        ))}
      </nav>
      <div className="flex h-[27px] shrink-0 items-center border-b border-[#8b9098] bg-[#c9cbd0] pl-0.5">
        <Combo value="基础层" label="楼层" className="h-[23px] w-[100px]" />
        <Combo value="主构件" label="构件分类" className="h-[23px] w-[100px]" />
        <Combo value="上弦/外弦" label="构件类型" className="h-[23px] w-[100px]" />
        <Combo value="1-1" label="构件" className="h-[23px] w-[100px]" />
      </div>
      <div className="flex min-h-0 flex-1">
        <StructurePanel />
        <div className="ml-1 flex w-[312px] shrink-0 flex-col gap-1">
          <MemberPanel />
          <PropertyPanel />
        </div>
        <Splitter />
        <main className="relative min-w-0 flex-1 overflow-hidden bg-[#22282f]">
          <Scene />
          <ViewTools />
          <div className="absolute left-[262px] top-[530px] whitespace-nowrap border border-black bg-[#999] px-[5px] pb-px pt-0.5 text-black">
            请选择需要平齐的图元的表面作为平齐面（球体与管选择表面），按鼠标左键选择
          </div>
        </main>
        <Splitter flip />
        <div className="flex w-[266px] shrink-0 flex-col gap-1">
          <SheetPanel />
          <LayerPanel />
        </div>
      </div>
      <StatusBar />
    </div>
  );
}
